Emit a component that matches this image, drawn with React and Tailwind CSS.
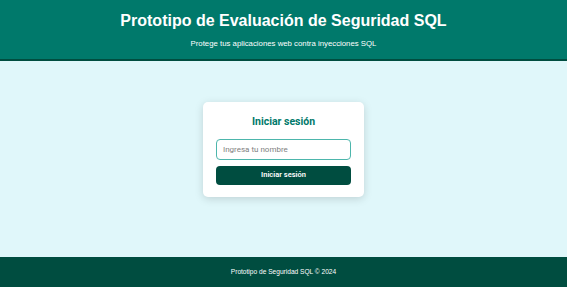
import React from "react";

const App = () => {
  return (
    <div className="flex flex-col h-[287px] w-full bg-[#e0f7fa] font-['Liberation_Sans',Arial,sans-serif]">
      <header className="h-[61px] bg-[#00796b] border-b-2 border-[#004d40] flex flex-col items-center text-white">
        <h1 className="text-[16px] font-bold leading-none mt-[13px]">
          Prototipo de Evaluación de Seguridad SQL
        </h1>
        <p className="text-[7.8px] mt-[11px] leading-none">
          Protege tus aplicaciones web contra inyecciones SQL
        </p>
      </header>

      <main className="flex-1 flex justify-center items-start pt-[41px]">
        <div className="w-[161px] h-[95px] bg-white rounded-[5px] shadow-[0_2px_8px_rgba(0,0,0,0.15)] px-[13px] pt-[15px] flex flex-col font-['Roboto',sans-serif]">
          <h2 className="text-[10.5px] font-bold text-[#00796b] text-center leading-none">
            Iniciar sesión
          </h2>
          <input
            type="text"
            placeholder="Ingresa tu nombre"
            className="mt-[11px] h-[21px] w-full border border-[#4db6ac] rounded-[4px] px-[6px] text-[8px] placeholder:text-[#808080] outline-none"
          />
          <button className="mt-[6px] h-[19px] w-full bg-[#004d40] text-white text-[7.5px] font-semibold rounded-[4px]">
            Iniciar sesión
          </button>
        </div>
      </main>

      <footer className="h-[30px] bg-[#004d40] flex items-center justify-center text-white text-[6.6px]">
        Prototipo de Seguridad SQL © 2024
      </footer>
    </div>
  );
};

export default App;
